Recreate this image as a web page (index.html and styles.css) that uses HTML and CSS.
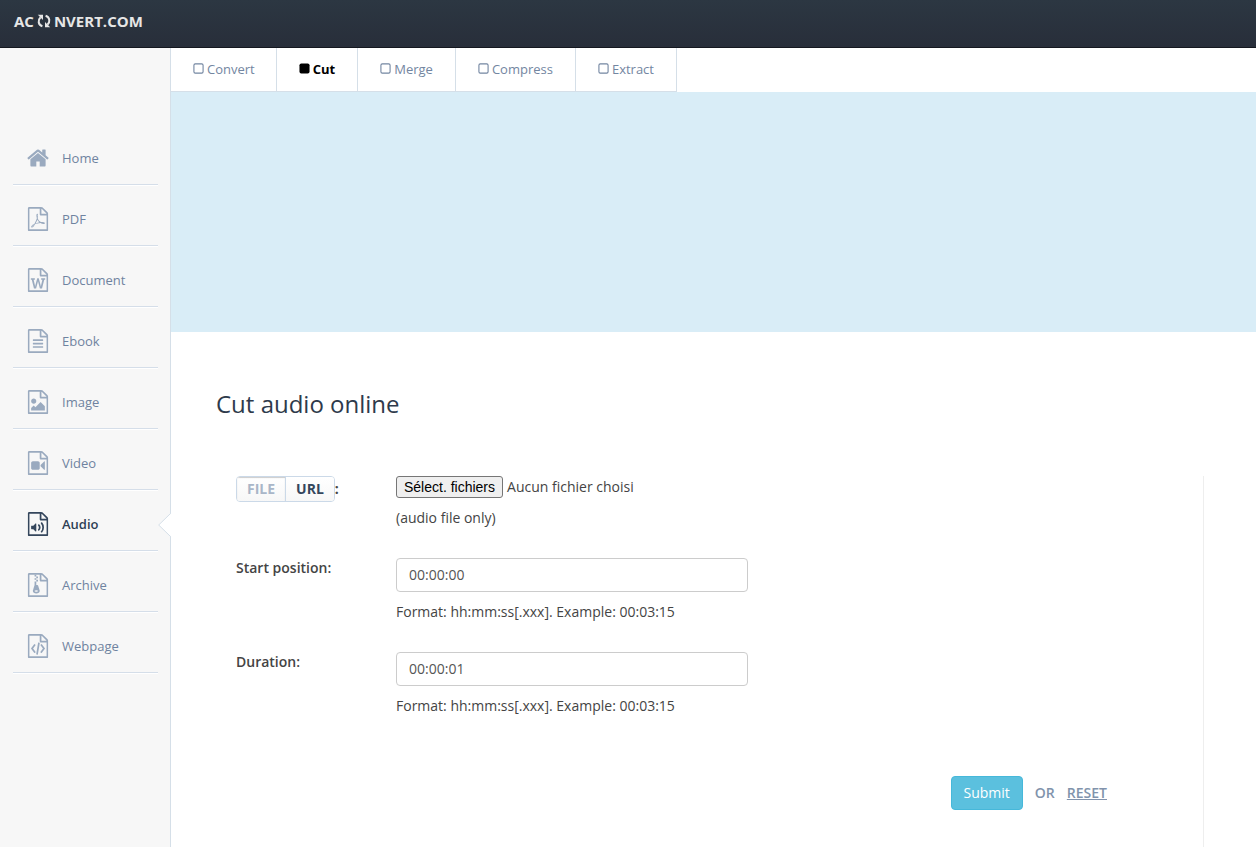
FILE: index.html
```html
<!DOCTYPE html>
<html lang="en">
<head>
<meta charset="utf-8">
<title>Cut audio online</title>
<link rel="stylesheet" href="styles.css">
</head>
<body>
<svg class="defs" aria-hidden="true">
  <symbol id="file" viewBox="0 0 1536 1792"><path d="M1468 380q28 28 48 76t20 88v1152q0 40-28 68t-68 28h-1344q-40 0-68-28t-28-68v-1600q0-40 28-68t68-28h896q40 0 88 20t76 48zm-444-244v376h376q-10-29-22-41l-313-313q-12-12-41-22zm384 1528v-1024h-416q-40 0-68-28t-28-68v-416h-768v1536h1280z"/></symbol>
  <symbol id="box" viewBox="0 0 12 12"><rect x="1" y="1" width="10" height="10" rx="1.5" fill="none" stroke="currentColor" stroke-width="1.2"/></symbol>
</svg>
<header class="topbar">
  <a class="brand" href="#">AC<svg class="brand-icon" viewBox="0 0 14 14" aria-hidden="true"><path d="M0.800 0.800H6V6zM13.200 13.200H8V8z"/><path class="brand-arc" d="M3.600 3.200C0.600 6 1 10.800 5.400 12.300M10.400 10.800C13.400 8 13 3.200 8.600 1.700"/></svg>NVERT.COM</a>
</header>
<div class="layout">
  <nav class="sidebar" aria-label="Categories">
    <ul class="menu">
      <li class="menu-item"><a class="menu-link" href="#"><svg class="icon" viewBox="0 0 1664 1792"><path d="M1408 992v480q0 26-19 45t-45 19h-384v-384h-256v384h-384q-26 0-45-19t-19-45v-480q0-1 .5-3t.5-3l575-474 575 474q1 2 1 6zm223-69l-62 74q-8 9-21 11h-3q-13 0-21-7l-692-577-692 577q-12 8-24 7-13-2-21-11l-62-74q-8-10-7-23.500t11-21.500l719-599q32-26 76-26t76 26l244 204v-195q0-14 9-23t23-9h192q14 0 23 9t9 23v408l219 182q10 8 11 21.500t-7 23.500z"/></svg><span>Home</span></a></li>
      <li class="menu-item"><a class="menu-link" href="#"><svg class="icon" viewBox="0 0 1536 1792"><use href="#file"/><path d="M894 1071q33 26 84 56 59-7 117-7 147 0 177 49 16 22 2 52 0 1-1 2l-2 2v1q-6 38-71 38-48 0-115-20t-130-53q-221 24-392 83-153 262-242 262-15 0-28-7l-24-12q-1-1-6-5-10-10-6-36 9-40 56-91.500t132-96.500q14-9 23 6 2 2 2 4 52-85 107-197 68-136 104-262-24-82-30.500-159.500t6.500-127.500q11-40 42-40h22q23 0 35 15 18 21 9 68-2 6-4 8 1 3 1 8v30q-2 123-14 192 55 164 146 238zm-576 411q52-24 137-158-51 40-87.500 84t-49.500 74zm398-920q-15 42-2 132 1-7 7-44 0-3 7-43 1-4 4-8-1-1-1-2t-1-2q-1-22-13-36 0 1-1 2v1zm-124 661q135-54 284-81-2-1-13-9.500t-16-13.500q-76-67-127-176-27 86-83 197-30 56-45 83zm646-16q-24-24-140-24 76 28 124 28 14 0 18-1 0-1-2-3z"/></svg><span>PDF</span></a></li>
      <li class="menu-item"><a class="menu-link" href="#"><svg class="icon" viewBox="0 0 1536 1792"><use href="#file"/><path d="M233 768v107h70l164 661h159l128-485q7-20 10-46 2-16 2-24h4l3 24q1 3 3.500 20t5.500 26l128 485h159l164-661h70v-107h-300v107h90l-99 438q-5 20-7 46l-2 21h-4l-3-21q-1-5-4-21t-5-25l-144-545h-114l-144 545q-2 9-4.500 24.500t-3.500 21.500l-4 21h-4l-2-21q-2-26-7-46l-99-438h90v-107h-300z"/></svg><span>Document</span></a></li>
      <li class="menu-item"><a class="menu-link" href="#"><svg class="icon" viewBox="0 0 1536 1792"><use href="#file"/><path d="M384 800q0-14 9-23t23-9h704q14 0 23 9t9 23v64q0 14-9 23t-23 9h-704q-14 0-23-9t-9-23v-64zm736 224q14 0 23 9t9 23v64q0 14-9 23t-23 9h-704q-14 0-23-9t-9-23v-64q0-14 9-23t23-9h704zm0 256q14 0 23 9t9 23v64q0 14-9 23t-23 9h-704q-14 0-23-9t-9-23v-64q0-14 9-23t23-9h704z"/></svg><span>Ebook</span></a></li>
      <li class="menu-item"><a class="menu-link" href="#"><svg class="icon" viewBox="0 0 1536 1792"><use href="#file"/><path d="M1280 1216v320h-1024v-192l192-192 128 128 384-384zm-832-192q-80 0-136-56t-56-136 56-136 136-56 136 56 56 136-56 136-136 56z"/></svg><span>Image</span></a></li>
      <li class="menu-item"><a class="menu-link" href="#"><svg class="icon" viewBox="0 0 1536 1792"><use href="#file"/><path d="M768 768q52 0 90 38t38 90v384q0 52-38 90t-90 38h-384q-52 0-90-38t-38-90v-384q0-52 38-90t90-38h384zm492 2q20 8 20 30v576q0 22-20 30-8 2-12 2-14 0-23-9l-265-266v-90l265-266q9-9 23-9 4 0 12 2z"/></svg><span>Video</span></a></li>
      <li class="menu-item active"><a class="menu-link" href="#" aria-current="page"><svg class="icon" viewBox="0 0 1536 1792"><use href="#file"/><path d="M620 850q20 8 20 30v544q0 22-20 30-8 2-12 2-12 0-23-9l-166-167h-131q-14 0-23-9t-9-23v-192q0-14 9-23t23-9h131l166-167q16-15 35-7zm417 689q31 0 50-24 129-159 129-363t-129-363q-16-21-43-24t-47 14q-21 17-23.500 43.500t14.500 47.500q100 123 100 282t-100 282q-17 21-14.500 47.500t23.500 42.500q18 15 40 15zm-211-148q27 0 47-20 87-93 87-219t-87-219q-18-19-45-20t-46 17-20 44.500 18 46.500q52 57 52 131t-52 131q-19 20-18 46.500t20 44.500q20 17 44 17z"/></svg><span>Audio</span></a><svg class="pointer" viewBox="0 0 13 24" aria-hidden="true"><path class="pointer-fill" d="M13 0.500L0.700 12L13 23.500z"/><path class="pointer-edge" d="M12.500 0.500L0.700 12L12.500 23.500"/></svg></li>
      <li class="menu-item"><a class="menu-link" href="#"><svg class="icon" viewBox="0 0 1536 1792"><use href="#file"/><path d="M512 128h128v128h-128zM640 256h128v128h-128zM512 384h128v128h-128zM640 512h128v128h-128zM512 640h128v128h-128zM781 943l107 349q8 27 8 52 0 83-72.500 137.500t-183.500 54.500-183.500-54.500-72.500-137.500q0-25 8-52 21-63 120-396v-128h128v128h79q22 0 39 13t23 34zm-141 465q53 0 90.500-19t37.500-45-37.500-45-90.500-19-90.500 19-37.500 45 37.500 45 90.500 19z"/></svg><span>Archive</span></a></li>
      <li class="menu-item"><a class="menu-link" href="#"><svg class="icon" viewBox="0 0 1536 1792"><use href="#file"/><path d="M480 768q8-11 21-12.500t24 6.500l51 38q11 8 12.500 21t-6.500 24l-182 243 182 243q8 11 6.500 24t-12.500 21l-51 38q-11 8-24 6.500t-21-12.500l-226-301q-14-19 0-38zm802 301q14 19 0 38l-226 301q-8 11-21 12.500t-24-6.500l-51-38q-11-8-12.500-21t6.500-24l182-243-182-243q-8-11-6.500-24t12.500-21l51-38q11-8 24-6.500t21 12.500zm-620 461q-13-2-20.500-13t-5.500-24l138-831q2-13 13-20.500t24-5.500l63 10q13 2 20.500 13t5.500 24l-138 831q-2 13-13 20.500t-24 5.500z"/></svg><span>Webpage</span></a></li>
    </ul>
  </nav>
  <main class="content">
    <nav class="tabs" aria-label="Audio tools">
      <a class="tab" href="#"><svg class="tab-icon"><use href="#box"/></svg>Convert</a>
      <a class="tab current" href="#" aria-current="page"><svg class="tab-icon" viewBox="0 0 12 12"><rect x="0.500" y="0.500" width="11" height="11" rx="2"/></svg>Cut</a>
      <a class="tab" href="#"><svg class="tab-icon"><use href="#box"/></svg>Merge</a>
      <a class="tab" href="#"><svg class="tab-icon"><use href="#box"/></svg>Compress</a>
      <a class="tab" href="#"><svg class="tab-icon"><use href="#box"/></svg>Extract</a>
    </nav>
    <div class="banner"></div>
    <section class="page">
      <h1 class="title">Cut audio online</h1>
      <form class="form">
        <div class="row">
          <div class="row-label">
            <span class="switch"><button class="switch-btn pressed" type="button">FILE</button><button class="switch-btn" type="button">URL</button></span><span class="colon">:</span>
          </div>
          <div class="field">
            <div class="picker">
              <input class="picker-input" type="file" id="file-input" accept="audio/*" multiple>
              <label class="picker-btn" for="file-input">Sélect. fichiers</label>
              <span>Aucun fichier choisi</span>
            </div>
            <p class="hint">(audio file only)</p>
          </div>
        </div>
        <div class="row">
          <label class="row-label" for="start">Start position:</label>
          <div class="field">
            <input class="text-input" type="text" id="start" value="00:00:00">
            <p class="hint">Format: hh:mm:ss[.xxx]. Example: 00:03:15</p>
          </div>
        </div>
        <div class="row">
          <label class="row-label" for="duration">Duration:</label>
          <div class="field">
            <input class="text-input" type="text" id="duration" value="00:00:01">
            <p class="hint">Format: hh:mm:ss[.xxx]. Example: 00:03:15</p>
          </div>
        </div>
        <div class="actions">
          <button class="submit" type="submit">Submit</button>
          <span>OR</span>
          <button class="reset" type="reset">RESET</button>
        </div>
      </form>
    </section>
  </main>
</div>
</body>
</html>
```
FILE: styles.css
```css
* { box-sizing: border-box; }

body {
  margin: 0;
  min-height: 100vh;
  display: flex;
  flex-direction: column;
  background: #fff;
  color: #444;
  font: 14px/20px "Open Sans", sans-serif;
}

a { text-decoration: none; color: inherit; }
button, input { font: inherit; }
svg { fill: currentColor; flex: none; }
.defs { position: absolute; width: 0; height: 0; }

.topbar {
  height: 48px;
  padding: 11px 14px;
  background: linear-gradient(#2c3742, #282e3a);
  border-bottom: 1px solid #14171f;
}

.brand {
  display: inline-flex;
  align-items: center;
  color: #e6e6e6;
  font-weight: 700;
  font-size: 15px;
}

.brand-icon { width: 14px; height: 14px; margin: 0 3px; }
.brand-arc { fill: none; stroke: currentColor; stroke-width: 2; }

.layout { display: flex; flex: 1; }

.sidebar {
  width: 171px;
  flex: none;
  padding: 76px 12px 0 13px;
  background: #f7f7f7;
  border-right: 1px solid #d5dfe8;
}

.menu { margin: 0; padding: 0; list-style: none; }

.menu-item {
  position: relative;
  border-bottom: 1px solid #d5dee9;
  box-shadow: 0 1px 0 #fff;
}

.menu-link {
  display: flex;
  align-items: center;
  gap: 13px;
  height: 60px;
  padding: 8px 0 0 14px;
  color: #6f83a0;
  font-size: 13px;
}

.icon { width: 22px; height: 24px; color: #9aaabf; }
.active .menu-link { color: #2e3f54; font-weight: 600; }
.active .icon { color: #34465c; }

.pointer {
  position: absolute;
  right: -13px;
  top: 23px;
  width: 13px;
  height: 24px;
}
.pointer-fill { fill: #fff; }
.pointer-edge { fill: none; stroke: #d5dfe8; }

.content { flex: 1; min-width: 0; }

.tabs { display: flex; }

.tab {
  display: flex;
  align-items: center;
  gap: 3px;
  height: 44px;
  padding: 0 22px 2px;
  border-right: 1px solid #d5dfe8;
  border-bottom: 1px solid #d5dfe8;
  color: #7386a1;
  font-size: 13px;
}
.tab:first-child { padding-right: 21px; }
.tab-icon { width: 11px; height: 11px; }
.tab.current { color: #000; font-weight: 700; }

.banner { height: 240px; background: #d9edf7; }

.page { padding: 56px 52px 0 45px; }

.title {
  margin: 0;
  color: #2e3a4b;
  font-size: 24px;
  line-height: 32px;
  font-weight: 400;
}

.form {
  display: flex;
  flex-direction: column;
  gap: 30px;
  min-height: 371px;
  margin-top: 56px;
  padding-left: 20px;
  border-right: 1px solid #eee;
}

.row { display: flex; }
.row-label { width: 160px; flex: none; font-weight: 600; }
.field { flex: 1; }

.switch {
  display: inline-flex;
  border: 1px solid #cbd9e8;
  border-radius: 4px;
  overflow: hidden;
}

.switch-btn {
  padding: 2px 10px;
  border: 0;
  background: linear-gradient(#fff, #f7f7f7);
  color: #34465c;
  font-weight: 700;
}
.switch-btn.pressed {
  color: #a9b6c8;
  border-right: 1px solid #cbd9e8;
  box-shadow: inset 0 1px 1px #ccc;
}
.colon { font-weight: 700; }

.picker { position: relative; display: flex; align-items: center; gap: 4px; height: 22px; }
.picker-input { position: absolute; width: 107px; height: 22px; opacity: 0; }
.picker-btn {
  padding: 0 7px;
  border: 1px solid #767676;
  border-radius: 3px;
  background: #efefef;
  color: #000;
  font-family: "Liberation Sans", Arial, sans-serif;
}

.hint { margin: 10px 0 0; }

.text-input {
  display: block;
  width: 352px;
  height: 34px;
  padding: 5px 12px 7px;
  border: 1px solid #ccc;
  border-radius: 4px;
  background: #fff;
  color: #555;
}

.actions {
  display: flex;
  align-items: baseline;
  justify-content: flex-end;
  gap: 12px;
  padding: 30px 96px 0 0;
  color: #8193ac;
  font-weight: 600;
}

.submit {
  padding: 6px 12px;
  border: 1px solid #46b8da;
  border-radius: 4px;
  background: #5bc0de;
  color: #fff;
  font-weight: 400;
}

.reset {
  padding: 0;
  border: 0;
  background: none;
  color: #8193ac;
  font-weight: 600;
  text-decoration: underline;
}
```
